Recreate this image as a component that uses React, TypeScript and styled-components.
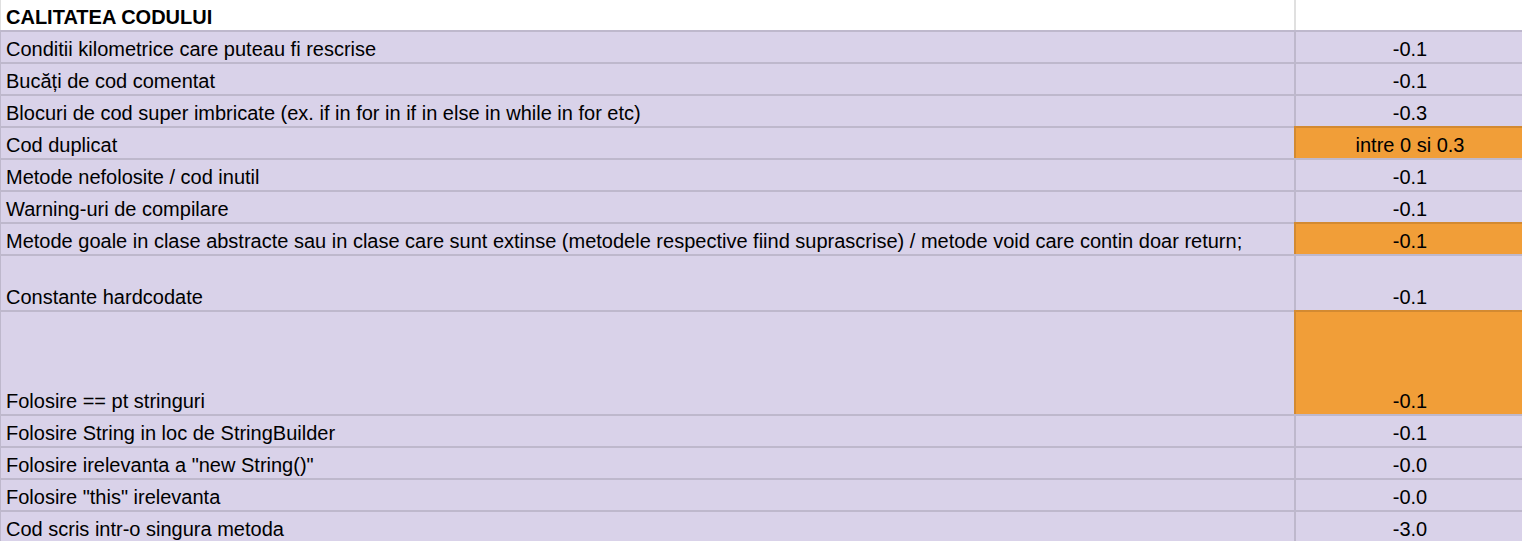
import React from "react";
import styled, { createGlobalStyle } from "styled-components";

const GlobalStyle = createGlobalStyle`
  body {
    margin: 0;
    background: #ffffff;
    font-family: "Liberation Sans", Arial, sans-serif;
    overflow: hidden;
  }
`;

const Sheet = styled.div`
  width: 1522px;
  display: flex;
  flex-direction: column;
`;

const Row = styled.div<{ $height: number }>`
  display: grid;
  grid-template-columns: 1294px 1fr;
  height: ${(p) => p.$height}px;
`;

const Cell = styled.div<{ $bg: string; $top: boolean }>`
  display: flex;
  align-items: flex-end;
  box-sizing: border-box;
  background: ${(p) => p.$bg};
  border-top: ${(p) => (p.$top ? "2px solid rgba(0, 0, 0, 0.12)" : "none")};
  padding: 0 6px 1px;
  font-size: 20px;
  line-height: 23px;
  color: #000000;
  white-space: nowrap;
  overflow: hidden;
`;

const LabelCell = styled(Cell)<{ $bold?: boolean }>`
  border-left: 1px solid rgba(0, 0, 0, 0.12);
  padding-left: 5px;
  font-weight: ${(p) => (p.$bold ? 700 : 400)};
`;

const ValueCell = styled(Cell)`
  justify-content: center;
  border-left: 2px solid rgba(0, 0, 0, 0.12);
  padding-left: 8px;
`;

const LAVENDER = "#d9d2e9";
const ORANGE = "#f19e38";

interface Item {
  label: string;
  value: string;
  height?: number;
  warn?: boolean;
}

const items: Item[] = [
  { label: "Conditii kilometrice care puteau fi rescrise", value: "-0.1" },
  { label: "Bucăți de cod comentat", value: "-0.1" },
  {
    label:
      "Blocuri de cod super imbricate (ex. if in for in if in else in while in for etc)",
    value: "-0.3",
  },
  { label: "Cod duplicat", value: "intre 0 si 0.3", warn: true },
  { label: "Metode nefolosite / cod inutil", value: "-0.1" },
  { label: "Warning-uri de compilare", value: "-0.1" },
  {
    label:
      "Metode goale in clase abstracte sau in clase care sunt extinse (metodele respective fiind suprascrise) / metode void care contin doar return;",
    value: "-0.1",
    warn: true,
  },
  { label: "Constante hardcodate", value: "-0.1", height: 56 },
  { label: "Folosire == pt stringuri", value: "-0.1", height: 104, warn: true },
  { label: "Folosire String in loc de StringBuilder", value: "-0.1" },
  { label: 'Folosire irelevanta a "new String()"', value: "-0.0" },
  { label: 'Folosire "this" irelevanta', value: "-0.0" },
  { label: "Cod scris intr-o singura metoda", value: "-3.0" },
];

const App: React.FC = () => {
  return (
    <>
      <GlobalStyle />
      <Sheet>
        <Row $height={30}>
          <LabelCell $bg="#ffffff" $top={false} $bold>
            CALITATEA CODULUI
          </LabelCell>
          <ValueCell $bg="#ffffff" $top={false} />
        </Row>
        {items.map((item) => (
          <Row key={item.label} $height={item.height ?? 32}>
            <LabelCell $bg={LAVENDER} $top>
              {item.label}
            </LabelCell>
            <ValueCell $bg={item.warn ? ORANGE : LAVENDER} $top>
              {item.value}
            </ValueCell>
          </Row>
        ))}
      </Sheet>
    </>
  );
};

export default App;
